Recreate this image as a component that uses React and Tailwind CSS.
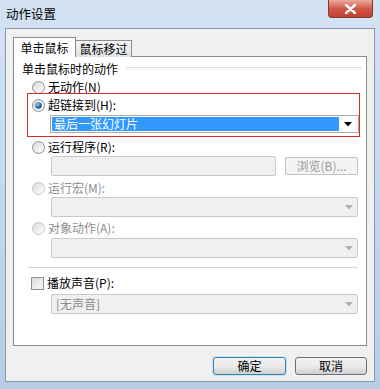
import { useState } from "react";

const font = "font-['Noto_Sans_CJK_SC','Microsoft_YaHei',sans-serif]";

function Radio({ checked, disabled }) {
  return (
    <svg width="13" height="13" viewBox="0 0 13 13" className="shrink-0">
      <defs>
        <linearGradient id="rg" x1="0" y1="0" x2="1" y2="1">
          <stop offset="0" stopColor="#d8d8d8" />
          <stop offset="1" stopColor="#ffffff" />
        </linearGradient>
        <radialGradient id="rd" cx="0.4" cy="0.35" r="0.7">
          <stop offset="0" stopColor="#9fd0f5" />
          <stop offset="0.6" stopColor="#2f6fa8" />
          <stop offset="1" stopColor="#163e66" />
        </radialGradient>
      </defs>
      <circle cx="6.5" cy="6.5" r="6" fill="url(#rg)" stroke={disabled ? "#c4c4c4" : "#8e8f8f"} />
      {checked && <circle cx="6.5" cy="6.5" r="3.2" fill="url(#rd)" />}
    </svg>
  );
}

function Arrow({ disabled }) {
  return (
    <svg width="8" height="5" viewBox="0 0 8 5">
      <path d="M0 0 L8 0 L4 4.5 Z" fill={disabled ? "#b0b0b0" : "#000"} />
    </svg>
  );
}

function DisabledSelect({ text, className = "" }) {
  return (
    <div className={`ml-[37px] mr-[8px] h-[20px] flex items-center border border-[#c9c9c9] rounded-[2px] bg-[#f0f0f0] ${className}`}>
      <span className="flex-1 pl-[4px] text-[#8a8a8a]">{text}</span>
      <div className="w-[17px] flex justify-center">
        <Arrow disabled />
      </div>
    </div>
  );
}

export default function App() {
  const [sound, setSound] = useState(false);

  return (
    <div className={`w-[380px] h-[389px] flex flex-col bg-gradient-to-b from-[#d3e3f3] via-[#c2d8ee] to-[#b5cde7] text-[12px] leading-[16px] text-black ${font}`}>
      {/* title bar */}
      <div className="h-[28px] flex items-start">
        <span className="pl-[6px] pt-[6px] text-[12.5px]">动作设置</span>
        <div className="ml-auto mr-[7px] w-[45px] h-[18px] rounded-b-[4px] border border-t-0 border-[#7d3a2e] bg-gradient-to-b from-[#e9a99b] via-[#d0594a] to-[#c4402c] flex items-center justify-center">
          <svg width="11" height="10" viewBox="0 0 11 10">
            <path d="M1 1 L10 9 M10 1 L1 9" stroke="#fff" strokeWidth="2.4" strokeLinecap="round" />
          </svg>
        </div>
      </div>

      {/* client area */}
      <div className="flex-1 mx-[5px] mb-[7px] border border-[#8799ab] bg-[#f0f0f0] flex flex-col px-[7px] pt-[8px]">
        {/* tabs */}
        <div className="flex items-end h-[20px] relative z-10">
          <div className="h-[20px] w-[63px] bg-white border border-b-0 border-[#898c95] flex items-center justify-center">
            单击鼠标
          </div>
          <div className="h-[17px] w-[56px] bg-gradient-to-b from-[#f5f5f5] to-[#e2e2e2] border border-l-0 border-b-0 border-[#898c95] flex items-center justify-center">
            鼠标移过
          </div>
        </div>
        <div className="h-[290px] -mt-[1px] bg-white border border-[#898c95] flex flex-col">
          {/* group label */}
          <div className="mt-[4px] h-[16px] flex items-center pl-[8px]">
            <span>单击鼠标时的动作</span>
            <div className="flex-1 ml-[8px] mr-[4px] h-px bg-[#d5dfe5] mt-[-3px]" />
          </div>

          <div className="mt-[2px] h-[16px] flex items-center pl-[18px] gap-[3px]">
            <Radio />
            <span>无动作(N)</span>
          </div>

          {/* highlighted area */}
          <div className="mt-[-2px] ml-[13px] mr-[6px] h-[44px] border border-[#d12b2b] flex flex-col">
            <div className="mt-[3px] h-[16px] flex items-center pl-[4px] gap-[3px]">
              <Radio checked />
              <span>超链接到(H):</span>
            </div>
            <div className="mt-[2px] ml-[22px] h-[18px] border border-[#a9a9a9] bg-white flex items-center p-[1px]">
              <div className="flex-1 h-full bg-[#3399ff] text-white pl-[2px] flex items-center">最后一张幻灯片</div>
              <div className="w-[18px] flex justify-center">
                <Arrow />
              </div>
            </div>
          </div>

          <div className="mt-[2px] h-[16px] flex items-center pl-[18px] gap-[3px]">
            <Radio />
            <span>运行程序(R):</span>
          </div>
          <div className="mt-[1px] h-[20px] flex ml-[37px] mr-[8px] gap-[9px]">
            <div className="w-[225px] border border-[#c9c9c9] rounded-[2px] bg-[#f0f0f0]" />
            <div className="flex-1 mt-[1px] h-[18px] border border-[#c2c2c2] rounded-[2px] bg-[#f4f4f4] text-[#9a9a9a] flex items-center justify-center">
              浏览(B)...
            </div>
          </div>

          <div className="mt-[4px] h-[16px] flex items-center pl-[18px] gap-[3px] text-[#8d8d8d]">
            <Radio disabled />
            <span>运行宏(M):</span>
          </div>
          <DisabledSelect className="mt-[1px]" />

          <div className="mt-[3px] h-[16px] flex items-center pl-[18px] gap-[3px] text-[#8d8d8d]">
            <Radio disabled />
            <span>对象动作(A):</span>
          </div>
          <DisabledSelect className="mt-[2px]" />

          <div className="mt-[9px] ml-[14px] mr-[8px] h-px bg-[#d5d5d5]" />

          <div className="mt-[7px] h-[16px] flex items-center pl-[17px] gap-[3px]" onClick={() => setSound(!sound)}>
            <div className="w-[13px] h-[13px] border border-[#8e8f8f] bg-gradient-to-br from-[#dcdcdc] to-[#f8f8f8] flex items-center justify-center">
              {sound && <span className="text-[10px] leading-none">✓</span>}
            </div>
            <span>播放声音(P):</span>
          </div>
          <DisabledSelect text="[无声音]" className="mt-[3px]" />
        </div>

        {/* buttons */}
        <div className="flex justify-end gap-[9px] mt-[11px]">
          <button className="w-[73px] h-[18px] rounded-[3px] border border-[#3c7fb1] shadow-[0_0_0_1px_#bfe3f7] bg-gradient-to-b from-[#f2f2f2] via-[#ebebeb] to-[#cfcfcf] flex items-center justify-center">
            确定
          </button>
          <button className="w-[72px] h-[18px] rounded-[3px] border border-[#707070] bg-gradient-to-b from-[#f2f2f2] via-[#ebebeb] to-[#cfcfcf] flex items-center justify-center">
            取消
          </button>
        </div>
      </div>
    </div>
  );
}
